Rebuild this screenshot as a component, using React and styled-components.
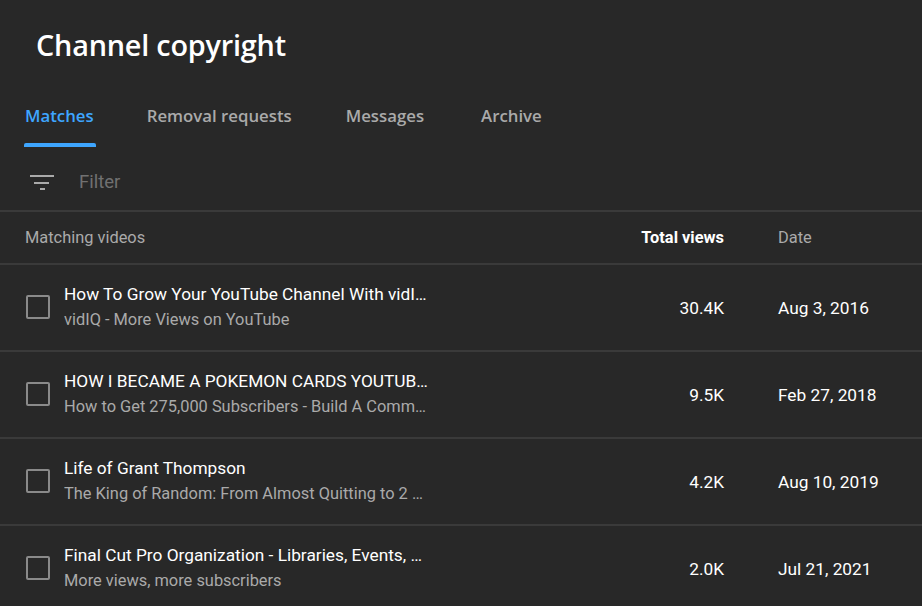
import React from "react";
import styled, { createGlobalStyle } from "styled-components";

const Global = createGlobalStyle`
  html, body { margin: 0; padding: 0; background: #282828; }
  body { font-family: Roboto, "Noto Sans", sans-serif; color: #fff; overflow: hidden; }
`;

const Page = styled.div`
  width: 922px;
  height: 606px;
  background: #282828;
  display: flex;
  flex-direction: column;
  overflow: hidden;
`;

const Title = styled.h1`
  margin: 0;
  padding: 26px 0 0 36px;
  font-family: "Open Sans", "Noto Sans", sans-serif;
  font-weight: 600;
  font-size: 28.8px;
  line-height: 38px;
  color: #fff;
  letter-spacing: -0.2px;
`;

const Tabs = styled.div`
  display: flex;
  flex: none;
  padding: 0 0 0 25px;
  margin-top: 41px;
`;

const Tab = styled.div`
  position: relative;
  font-family: "Open Sans", "Noto Sans", sans-serif;
  font-weight: 600;
  font-size: 16.8px;
  line-height: 22px;
  padding-bottom: 20px;
  margin-right: ${(p) => p.$gap}px;
  color: ${(p) => (p.$active ? "#3ea6ff" : "#aaaaaa")};
  &::after {
    content: "";
    display: ${(p) => (p.$active ? "block" : "none")};
    position: absolute;
    left: -1px;
    right: -2px;
    bottom: 0;
    height: 4px;
    border-radius: 2px 2px 0 0;
    background: #3ea6ff;
  }
`;

const FilterBar = styled.div`
  display: flex;
  flex: none;
  align-items: center;
  height: 65px;
  padding: 6px 0 0 30px;
  border-bottom: 2px solid #3a3a3a;
  box-sizing: border-box;
`;

const FilterText = styled.span`
  margin-left: 25px;
  font-size: 18.5px;
  color: #717171;
`;

const Row = styled.div`
  display: grid;
  flex: none;
  grid-template-columns: 1fr 120px 198px;
  align-items: center;
  height: ${(p) => p.$h}px;
  box-sizing: border-box;
  border-bottom: 2px solid #3a3a3a;
  padding-left: ${(p) => p.$pl}px;
`;

const HeadCell = styled.div`
  font-size: 16.4px;
  color: ${(p) => (p.$strong ? "#fff" : "#aaaaaa")};
  font-weight: ${(p) => (p.$strong ? 700 : 400)};
  text-align: ${(p) => (p.$right ? "right" : "left")};
  padding-left: ${(p) => p.$pl || 0}px;
`;

const VideoCell = styled.div`
  display: flex;
  align-items: center;
  min-width: 0;
`;

const Check = styled.div`
  width: 20px;
  height: 20px;
  border: 2px solid #8a8a8a;
  border-radius: 2px;
  flex: none;
  margin-right: 14px;
  margin-top: -2px;
`;

const Texts = styled.div`
  display: flex;
  flex-direction: column;
  width: 366px;
  margin-top: -3px;
`;

const VTitle = styled.div`
  font-size: 17.3px;
  line-height: 24px;
  color: #fff;
  white-space: nowrap;
  overflow: hidden;
  text-overflow: ellipsis;
`;

const VSub = styled.div`
  font-size: 16.4px;
  line-height: 22px;
  margin-top: 3px;
  color: #aaaaaa;
  white-space: nowrap;
  overflow: hidden;
  text-overflow: ellipsis;
`;

const Num = styled.div`
  font-size: 17.3px;
  color: #fff;
  text-align: ${(p) => (p.$right ? "right" : "left")};
  padding-left: ${(p) => p.$pl || 0}px;
`;

const FilterIcon = () => (
  <svg width="24" height="24" viewBox="0 0 24 24">
    <rect x="0" y="5" width="24" height="2" fill="#aaaaaa" />
    <rect x="4" y="12" width="15" height="2" fill="#aaaaaa" />
    <rect x="10" y="18" width="5" height="2" fill="#aaaaaa" />
  </svg>
);

const rows = [
  ["How To Grow Your YouTube Channel With vidIQ in 2016", "vidIQ - More Views on YouTube", "30.4K", "Aug 3, 2016"],
  ["HOW I BECAME A POKEMON CARDS YOUTUBER", "How to Get 275,000 Subscribers - Build A Community", "9.5K", "Feb 27, 2018"],
  ["Life of Grant Thompson", "The King of Random: From Almost Quitting to 2 Million", "4.2K", "Aug 10, 2019"],
  ["Final Cut Pro Organization - Libraries, Events, and Projects", "More views, more subscribers", "2.0K", "Jul 21, 2021"],
];

export default function App() {
  return (
    <Page>
      <Global />
      <Title>Channel copyright</Title>
      <Tabs>
        <Tab $active $gap={53}>Matches</Tab>
        <Tab $gap={54}>Removal requests</Tab>
        <Tab $gap={57}>Messages</Tab>
        <Tab $gap={0}>Archive</Tab>
      </Tabs>
      <FilterBar>
        <FilterIcon />
        <FilterText>Filter</FilterText>
      </FilterBar>
      <Row $h={53} $pl={25}>
        <HeadCell>Matching videos</HeadCell>
        <HeadCell $strong $right>Total views</HeadCell>
        <HeadCell $pl={54}>Date</HeadCell>
      </Row>
      {rows.map((r, i) => (
        <Row key={i} $h={87} $pl={26}>
          <VideoCell>
            <Check />
            <Texts>
              <VTitle>{r[0]}</VTitle>
              <VSub>{r[1]}</VSub>
            </Texts>
          </VideoCell>
          <Num $right>{r[2]}</Num>
          <Num $pl={54}>{r[3]}</Num>
        </Row>
      ))}
    </Page>
  );
}
